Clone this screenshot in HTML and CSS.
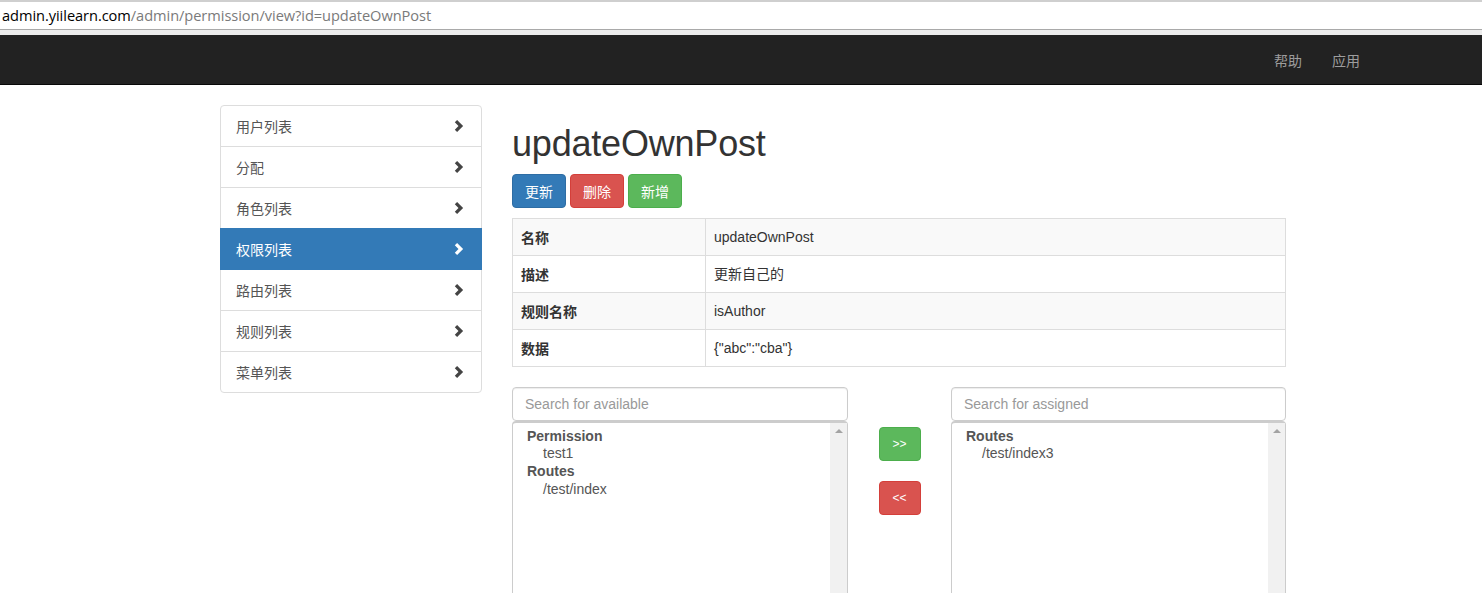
FILE: index.html
```html
<!DOCTYPE html>
<html>
<head>
<meta charset="utf-8">
<title>updateOwnPost</title>
<link rel="stylesheet" href="styles.css">
</head>
<body>
<div class="addressbar">
  <span class="host">admin.yiilearn.com</span><span class="path">/admin/permission/view?id=updateOwnPost</span>
</div>
<div class="chrome-strip"></div>
<nav class="navbar">
  <div class="navbar-inner">
    <a class="nav-link" href="#">帮助</a>
    <a class="nav-link" href="#">应用</a>
  </div>
</nav>
<div class="container">
  <aside class="sidebar">
    <a class="side-item" href="#"><span>用户列表</span><svg class="chev" viewBox="0 0 10 12"><polygon points="0.8,2.3 3.1,0 9.1,6 3.1,12 0.8,9.7 4.5,6"/></svg></a>
    <a class="side-item" href="#"><span>分配</span><svg class="chev" viewBox="0 0 10 12"><polygon points="0.8,2.3 3.1,0 9.1,6 3.1,12 0.8,9.7 4.5,6"/></svg></a>
    <a class="side-item" href="#"><span>角色列表</span><svg class="chev" viewBox="0 0 10 12"><polygon points="0.8,2.3 3.1,0 9.1,6 3.1,12 0.8,9.7 4.5,6"/></svg></a>
    <a class="side-item active" href="#"><span>权限列表</span><svg class="chev" viewBox="0 0 10 12"><polygon points="0.8,2.3 3.1,0 9.1,6 3.1,12 0.8,9.7 4.5,6"/></svg></a>
    <a class="side-item" href="#"><span>路由列表</span><svg class="chev" viewBox="0 0 10 12"><polygon points="0.8,2.3 3.1,0 9.1,6 3.1,12 0.8,9.7 4.5,6"/></svg></a>
    <a class="side-item" href="#"><span>规则列表</span><svg class="chev" viewBox="0 0 10 12"><polygon points="0.8,2.3 3.1,0 9.1,6 3.1,12 0.8,9.7 4.5,6"/></svg></a>
    <a class="side-item" href="#"><span>菜单列表</span><svg class="chev" viewBox="0 0 10 12"><polygon points="0.8,2.3 3.1,0 9.1,6 3.1,12 0.8,9.7 4.5,6"/></svg></a>
  </aside>
  <main class="main">
    <h1 class="title">updateOwnPost</h1>
    <div class="actions">
      <a class="btn btn-primary" href="#">更新</a>
      <a class="btn btn-danger" href="#">删除</a>
      <a class="btn btn-success" href="#">新增</a>
    </div>
    <table class="detail">
      <tr class="odd"><th>名称</th><td>updateOwnPost</td></tr>
      <tr><th>描述</th><td>更新自己的</td></tr>
      <tr class="odd"><th>规则名称</th><td>isAuthor</td></tr>
      <tr><th>数据</th><td>{"abc":"cba"}</td></tr>
    </table>
    <div class="assign">
      <div class="pane">
        <input class="search" type="text" placeholder="Search for available">
        <div class="listbox">
          <div class="list">
            <div class="grp">Permission</div>
            <div class="opt">test1</div>
            <div class="grp">Routes</div>
            <div class="opt">/test/index</div>
          </div>
          <div class="scrollbar"><span class="arrow"></span></div>
        </div>
      </div>
      <div class="movers">
        <a class="btn btn-success btn-move" href="#">&gt;&gt;</a>
        <a class="btn btn-danger btn-move" href="#">&lt;&lt;</a>
      </div>
      <div class="pane">
        <input class="search" type="text" placeholder="Search for assigned">
        <div class="listbox">
          <div class="list">
            <div class="grp">Routes</div>
            <div class="opt">/test/index3</div>
          </div>
          <div class="scrollbar"><span class="arrow"></span></div>
        </div>
      </div>
    </div>
  </main>
</div>
</body>
</html>
```
FILE: styles.css
```css
* { box-sizing: border-box; }
html, body { margin: 0; padding: 0; }
body {
  font-family: "Liberation Sans", "Noto Sans CJK SC", Arial, sans-serif;
  font-size: 14px;
  line-height: 1.42857;
  color: #333;
  background: #fff;
}
a { text-decoration: none; }

.addressbar {
  height: 30px;
  border-top: 2px solid #cfcfcf;
  border-bottom: 1px solid #a9a9a9;
  padding-left: 2px;
  font-family: "Open Sans", "Liberation Sans", sans-serif;
  font-size: 14.6px;
  line-height: 26px;
  white-space: nowrap;
  letter-spacing: -0.05px;
}
.addressbar .host { color: #000; }
.addressbar .path { color: #7a7a7a; }
.chrome-strip {
  height: 5px;
  background: #ececec;
}

.navbar {
  height: 50px;
  background: #222;
  border-bottom: 1px solid #080808;
}
.navbar-inner {
  width: 1170px;
  margin-left: 205px;
  display: flex;
  justify-content: flex-end;
}
.nav-link {
  padding: 15px 15px;
  line-height: 20px;
  color: #9d9d9d;
  font-family: "Noto Sans CJK SC", sans-serif;
  font-size: 14px;
}

.container {
  margin-left: 220px;
  padding-top: 20px;
  display: flex;
  align-items: flex-start;
  gap: 30px;
}

.sidebar {
  width: 262px;
  flex: none;
  display: flex;
  flex-direction: column;
}
.side-item {
  display: flex;
  align-items: center;
  justify-content: space-between;
  height: 42px;
  padding: 0 17px 0 15px;
  margin-bottom: -1px;
  border: 1px solid #ddd;
  background: #fff;
  color: #555;
  font-family: "Noto Sans CJK SC", sans-serif;
  font-size: 14px;
}
.side-item:first-child { border-top-left-radius: 4px; border-top-right-radius: 4px; }
.side-item:last-child { border-bottom-left-radius: 4px; border-bottom-right-radius: 4px; margin-bottom: 0; }
.side-item.active {
  background: #337ab7;
  border-color: #337ab7;
  color: #fff;
  position: relative;
  z-index: 1;
}
.chev { width: 10px; height: 12px; fill: #444; }
.side-item.active .chev { fill: #fff; }

.main { width: 774px; flex: none; }
.title {
  margin: 19px 0 10px;
  font-size: 36px;
  font-weight: 400;
  line-height: 39.6px;
  color: #333;
  letter-spacing: -0.2px;
}
.actions { display: flex; gap: 4px; margin-bottom: 10px; }
.btn {
  display: inline-block;
  padding: 6px 12px;
  font-size: 14px;
  line-height: 20px;
  border: 1px solid transparent;
  border-radius: 4px;
  color: #fff;
  text-align: center;
  font-family: "Noto Sans CJK SC", "Liberation Sans", sans-serif;
}
.actions .btn { height: 34px; line-height: 20px; padding: 6px 12px; }
.btn-primary { background: #337ab7; border-color: #2e6da4; }
.btn-danger { background: #d9534f; border-color: #d43f3a; }
.btn-success { background: #5cb85c; border-color: #4cae4c; }

.detail {
  width: 100%;
  border-collapse: collapse;
  border: 1px solid #ddd;
  margin-bottom: 20px;
}
.detail th, .detail td {
  border: 1px solid #ddd;
  padding: 8px;
  height: 37px;
  line-height: 20px;
  text-align: left;
  vertical-align: middle;
}
.detail th {
  width: 193px;
  font-family: "Noto Sans CJK SC", sans-serif;
  font-weight: 700;
  font-size: 14px;
}
.detail td { font-family: "Liberation Sans", "Noto Sans CJK SC", sans-serif; }
.detail tr.odd { background: #f9f9f9; }

.assign {
  display: flex;
  align-items: flex-start;
}
.pane { width: 336px; flex: none; }
.pane:last-child { width: 335px; }
.movers {
  width: 103px;
  flex: none;
  display: flex;
  flex-direction: column;
  align-items: center;
  gap: 20px;
  padding-top: 40px;
}
.btn-move {
  width: 42px;
  height: 34px;
  padding: 6px 0;
  font-family: "Liberation Sans", sans-serif;
  font-size: 12px;
  line-height: 20px;
}
.search {
  display: block;
  width: 100%;
  height: 34px;
  padding: 6px 12px;
  font-family: "Liberation Sans", sans-serif;
  font-size: 14px;
  color: #555;
  border: 1px solid #ccc;
  border-radius: 4px;
  box-shadow: inset 0 1px 1px rgba(0,0,0,.075);
  outline: none;
}
.search::placeholder { color: #999; }
.listbox {
  display: flex;
  height: 260px;
  border: 1px solid #ccc;
  border-top: 2px solid #ccc;
  border-radius: 4px 4px 0 0;
}
.list {
  flex: 1;
  padding: 5px 12px;
  color: #555;
  font-size: 14px;
  line-height: 17.7px;
}
.grp { font-weight: 700; padding-left: 2px; }
.opt { padding-left: 18px; }
.scrollbar {
  width: 17px;
  flex: none;
  background: #f1f1f1;
  display: flex;
  justify-content: center;
  padding-top: 6px;
}
.arrow {
  width: 0;
  height: 0;
  border-left: 4px solid transparent;
  border-right: 4px solid transparent;
  border-bottom: 4px solid #a3a3a3;
}
```
